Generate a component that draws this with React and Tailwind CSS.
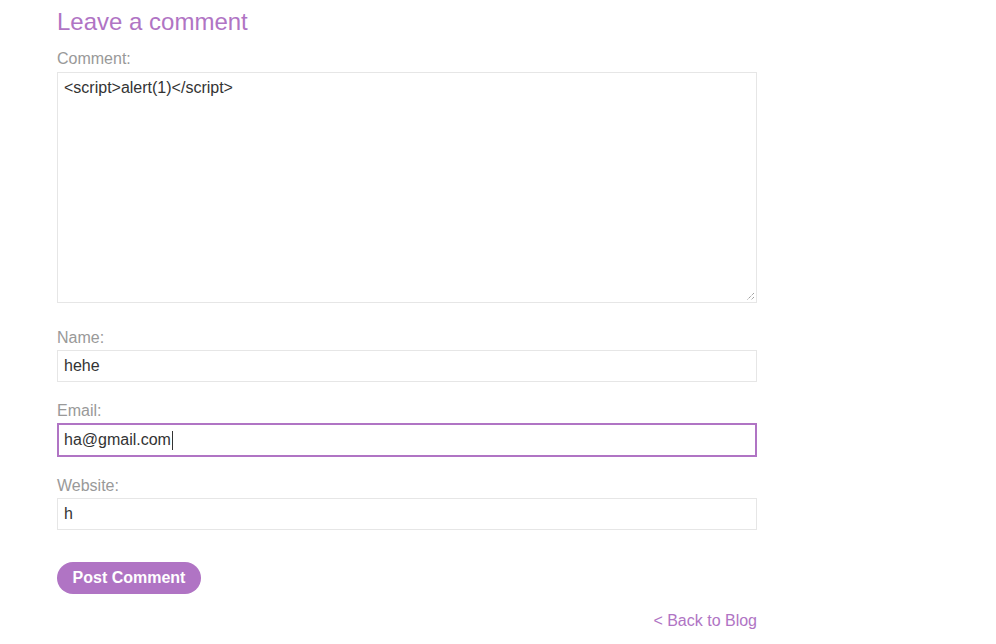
import React from 'react';

const Field = ({ label, value, focused, gap = 'mt-[18px]' }) => (
  <div className={gap}>
    <label className="block h-6 leading-6 text-base text-[#999999]">{label}</label>
    <div
      className={
        focused
          ? 'h-[34px] border-2 border-[#b074c4] px-[5px] flex items-center text-base text-[#333333]'
          : 'h-[32px] border border-[#e6e6e6] px-[6px] flex items-center text-base text-[#333333]'
      }
    >
      <span>{value}</span>
      {focused && <span className="w-px h-[19px] bg-[#333333] ml-px"></span>}
    </div>
  </div>
);

export default function App() {
  return (
    <div className="w-[996px] h-[644px] bg-white overflow-hidden font-['Liberation_Sans',Arial,sans-serif]">
      <div className="w-[700px] ml-[57px] pt-[7px]">
        <h2 className="text-2xl leading-[29px] text-[#b074c4]">Leave a comment</h2>
        <div className="mt-[11px]">
          <label className="block h-6 leading-6 text-base text-[#999999]">Comment:</label>
          <div className="relative mt-px h-[231px] border border-[#e6e6e6] px-[6px] pt-[5px] text-base leading-5 text-[#333333]">
            {'<script>alert(1)</script>'}
            <svg className="absolute right-[1px] bottom-[1px]" width="9" height="9" viewBox="0 0 9 9">
              <path d="M8 1L1 8M8 5L5 8" stroke="#777" strokeWidth="1" strokeDasharray="1 1" />
            </svg>
          </div>
        </div>
        <Field label="Name:" value="hehe" gap="mt-[23px]" />
        <Field label="Email:" value="ha@gmail.com" focused gap="mt-[17px]" />
        <Field label="Website:" value="h" gap="mt-[17px]" />
        <button className="mt-[32px] h-[32px] w-[144px] rounded-full bg-[#b074c4] text-white font-bold text-base">
          Post Comment
        </button>
        <div className="mt-[15px] text-right text-base leading-6 text-[#b074c4]">&lt; Back to Blog</div>
      </div>
    </div>
  );
}
